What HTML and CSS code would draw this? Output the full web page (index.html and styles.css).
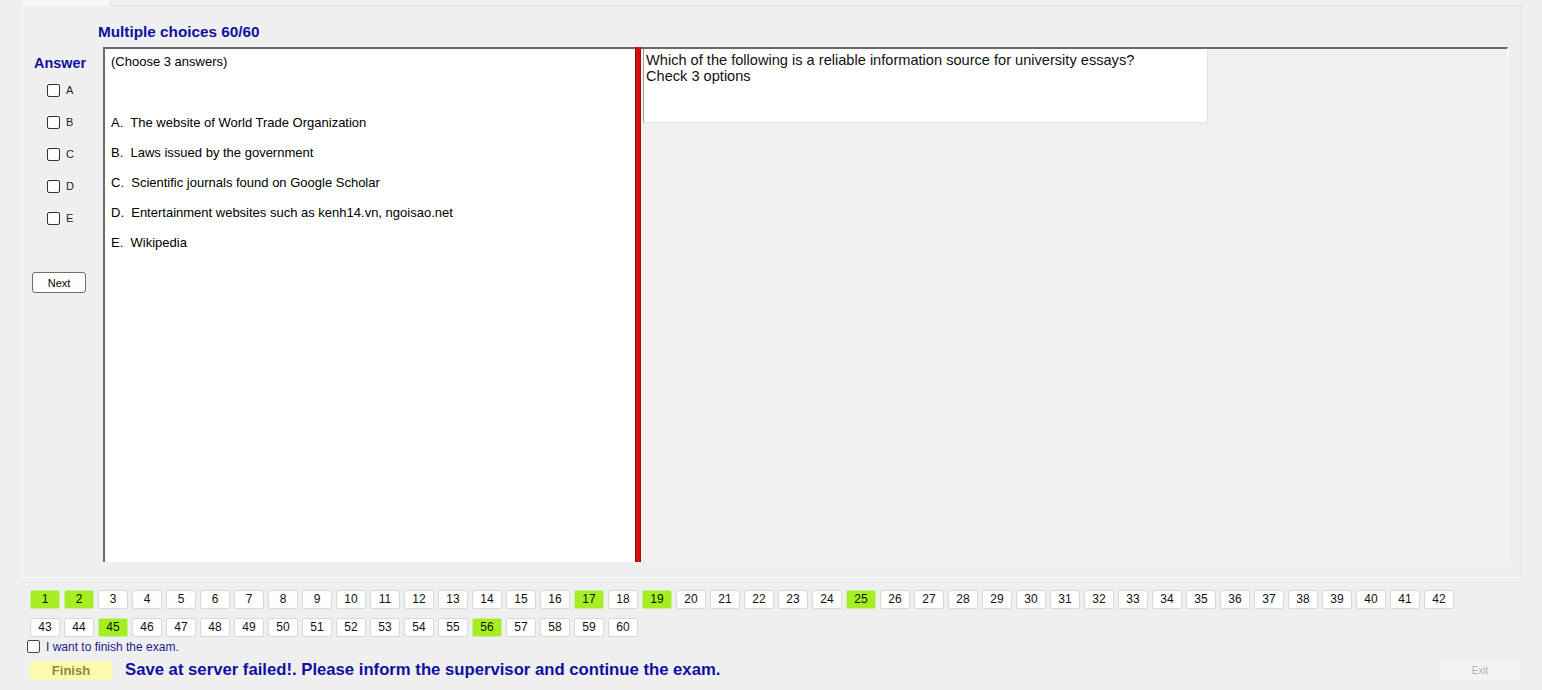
FILE: index.html
```html
<!DOCTYPE html>
<html>
<head>
<meta charset="utf-8">
<link rel="stylesheet" href="styles.css">
</head>
<body>
<div class="topbar"><div class="tab"></div><div class="tabline"></div></div>
<div class="panel">
  <div class="title">Multiple choices 60/60</div>
  <div class="work">
    <div class="answers">
      <div class="answer-label">Answer</div>
      <label class="opt"><input type="checkbox"><span>A</span></label>
      <label class="opt"><input type="checkbox"><span>B</span></label>
      <label class="opt"><input type="checkbox"><span>C</span></label>
      <label class="opt"><input type="checkbox"><span>D</span></label>
      <label class="opt"><input type="checkbox"><span>E</span></label>
      <button class="next">Next</button>
    </div>
    <div class="content">
      <div class="choose">(Choose 3 answers)</div>
      <div class="choices">
        <div class="choice">A.&nbsp; The website of World Trade Organization</div>
        <div class="choice">B.&nbsp; Laws issued by the government</div>
        <div class="choice">C.&nbsp; Scientific journals found on Google Scholar</div>
        <div class="choice">D.&nbsp; Entertainment websites such as kenh14.vn, ngoisao.net</div>
        <div class="choice">E.&nbsp; Wikipedia</div>
      </div>
    </div>
    <div class="splitter"></div>
    <div class="right">
      <div class="question">Which of the following is a reliable information source for university essays?<br>Check 3 options</div>
    </div>
  </div>
</div>
<div class="bottom">
  <div class="nums" id="nums"></div>
  <label class="finish-check"><input type="checkbox"><span>I want to finish the exam.</span></label>
  <div class="actions">
    <button class="finish">Finish</button>
    <div class="msg">Save at server failed!. Please inform the supervisor and continue the exam.</div>
    <button class="exit">Exit</button>
  </div>
</div>
<script src="script.js"></script>
</body>
</html>
```
FILE: script.js
```js
var answered = [1, 2, 17, 19, 25, 45, 56];
var box = document.getElementById('nums');
for (var r = 0; r < 2; r++) {
  var row = document.createElement('div');
  row.className = 'num-row';
  var start = r * 42 + 1, end = Math.min(start + 41, 60);
  for (var i = start; i <= end; i++) {
    var b = document.createElement('span');
    b.className = 'num' + (answered.indexOf(i) >= 0 ? ' done' : '');
    b.textContent = i;
    row.appendChild(b);
  }
  box.appendChild(row);
}
```
FILE: styles.css
```css
html, body {
  margin: 0;
  padding: 0;
}
body {
  width: 1542px;
  height: 690px;
  background: #f0eff0;
  font-family: "Liberation Sans", Arial, sans-serif;
  color: #000;
  overflow: hidden;
}
.topbar {
  height: 6px;
  display: flex;
  align-items: flex-end;
}
.tab {
  margin-left: 22px;
  width: 88px;
  height: 6px;
  background: #f7f7f7;
  border-right: 1px solid #e2e2e2;
}
.tabline {
  flex: 1;
  height: 1px;
  background: #e4e3e4;
  margin-right: 20px;
}
.panel {
  margin: 0 20px 0 22px;
  height: 572px;
  background: #f0eff0;
  border-left: 1px solid #f9f9f9;
  border-right: 1px solid #e6e5e6;
  border-bottom: 1px solid #fafafa;
  box-sizing: border-box;
  display: flex;
  flex-direction: column;
}
.title {
  margin: 17px 0 0 75px;
  height: 24px;
  font-weight: bold;
  font-size: 15.3px;
  color: #1010a0;
}
.work {
  display: flex;
  height: 515px;
  margin-right: 13px;
}
.answers {
  width: 80px;
  flex: none;
  display: flex;
  flex-direction: column;
}
.answer-label {
  margin: 8px 0 0 11px;
  font-weight: bold;
  font-size: 14.4px;
  color: #1010a0;
  height: 19px;
}
.opt {
  display: flex;
  align-items: center;
  height: 32px;
  margin-left: 24px;
  font-size: 11px;
  color: #222;
}
.opt input, .finish-check input {
  appearance: none;
  -webkit-appearance: none;
  width: 13px;
  height: 13px;
  margin: 0 6px 0 0;
  border: 1px solid #333;
  border-radius: 2px;
  background: #fff;
  box-sizing: border-box;
}
.next {
  margin: 38px 0 0 9px;
  width: 54px;
  height: 21px;
  padding: 0;
  font-family: "Liberation Sans", Arial, sans-serif;
  font-size: 11px;
  color: #000;
  background: #fdfdfd;
  border: 1px solid #6e6e6e;
  border-radius: 3px;
}
.content {
  width: 532px;
  flex: none;
  background: #fff;
  border-left: 2px solid #6a6a6a;
  border-top: 2px solid #6a6a6a;
  box-sizing: border-box;
  padding: 5px 0 0 6px;
  font-size: 13px;
}
.choose {
  height: 61px;
  line-height: 16px;
}
.choices {
  display: flex;
  flex-direction: column;
  gap: 15px;
}
.choice {
  height: 15px;
  line-height: 15px;
}
.splitter {
  width: 6px;
  flex: none;
  background: #d70f0f;
  border-left: 1px solid #8a1010;
  border-right: 1px solid #9a1515;
  box-sizing: border-box;
}
.right {
  flex: 1;
  border-top: 2px solid #6a6a6a;
  border-right: 1px solid #fcfcfc;
  background: #f1f0f1;
  padding-left: 2px;
}
.question {
  width: 565px;
  box-sizing: border-box;
  height: 74px;
  background: #fff;
  border-left: 1px solid #a0a0a0;
  border-right: 1px solid #e2e2e2;
  border-bottom: 1px solid #e2e2e2;
  padding: 3px 0 0 2px;
  font-size: 14.6px;
  line-height: 16px;
  color: #111;
}
.bottom {
  padding: 12px 0 0 30px;
}
.nums {
  display: flex;
  flex-direction: column;
  gap: 9px;
}
.num-row {
  display: flex;
  gap: 4px;
}
.num {
  width: 30px;
  height: 19px;
  box-sizing: border-box;
  background: #fefefe;
  border: 1px solid #d8d8d8;
  border-radius: 2px;
  font-size: 12px;
  line-height: 17px;
  text-align: center;
  color: #111;
}
.num.done {
  background: #a4ee22;
  border-color: #c6ef9a;
}
.finish-check {
  display: flex;
  align-items: center;
  margin: 2px 0 0 -3px;
  height: 15px;
  font-size: 12px;
  color: #1a1a8a;
}
.finish-check input {
  margin-right: 6px;
  border-color: #444;
}
.actions {
  display: flex;
  align-items: center;
  margin-top: 6px;
  height: 20px;
}
.finish {
  width: 82px;
  height: 19px;
  padding: 0;
  border: none;
  background: #fbfab0;
  font-family: "Liberation Sans", Arial, sans-serif;
  font-weight: bold;
  font-size: 13px;
  color: #8a8a3a;
}
.msg {
  margin-left: 13px;
  font-weight: bold;
  font-size: 16.7px;
  color: #1010a0;
  flex: 1;
}
.exit {
  width: 80px;
  height: 20px;
  margin-right: 22px;
  padding: 0;
  border: none;
  background: #f4f3f4;
  font-family: "Liberation Sans", Arial, sans-serif;
  font-size: 10px;
  color: #b0b0b0;
}
```
